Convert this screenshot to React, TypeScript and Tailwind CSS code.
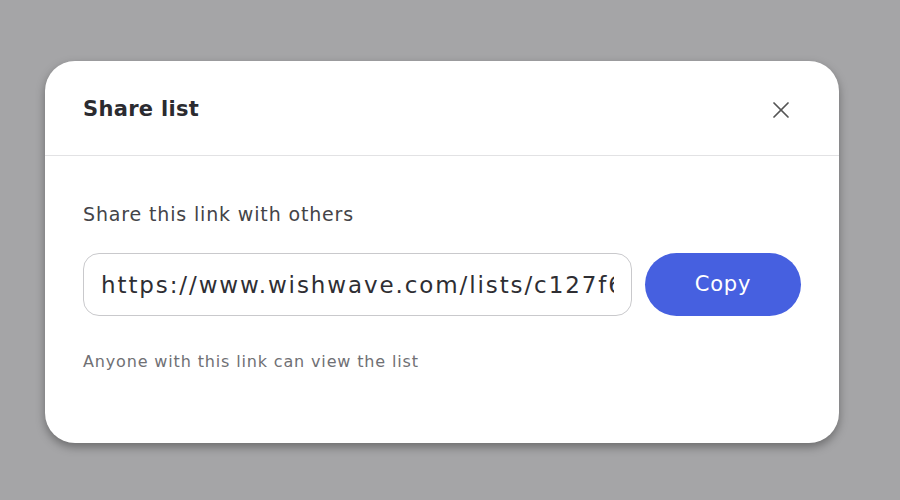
import { X } from 'lucide-react'

export default function App() {
  const link = 'https://www.wishwave.com/lists/c127f6b2e9a4'

  return (
    <div className="h-[500px] w-[900px] bg-[#a5a5a7] pt-[61px] pl-[45px] font-['DejaVu_Sans',sans-serif]">
      <div className="w-[794px] h-[382px] bg-white rounded-[30px] shadow-[0_4px_10px_rgba(0,0,0,0.35)] overflow-hidden">
        {/* Header */}
        <div className="h-[95px] flex items-center justify-between pl-[38px] pr-[40px] pt-[4px] border-b border-[#e2e2e4]">
          <h2 className="text-[21px] font-bold text-[#2b2b30] tracking-[0.3px]">Share list</h2>
          <button className="text-[#555] p-1">
            <X size={28} strokeWidth={1.5} />
          </button>
        </div>

        {/* Body */}
        <div className="px-[38px] pt-[44px]">
          <p className="text-[19px] text-[#444448] leading-[28px] tracking-[0.85px]">Share this link with others</p>

          <div className="flex gap-[13px] mt-[25px]">
            <input
              readOnly
              value={link}
              className="w-[549px] h-[63px] rounded-[16px] border border-[#c9c9cc] px-[17px] text-[23px] tracking-[1.9px] text-[#2e2e33] outline-none"
            />
            <button className="w-[156px] h-[63px] rounded-full bg-[#4660e0] text-white text-[21px] tracking-[0.8px]">
              Copy
            </button>
          </div>

          <p className="mt-[34px] text-[16px] text-[#707074] tracking-[0.85px]">Anyone with this link can view the list</p>
        </div>
      </div>
    </div>
  )
}
